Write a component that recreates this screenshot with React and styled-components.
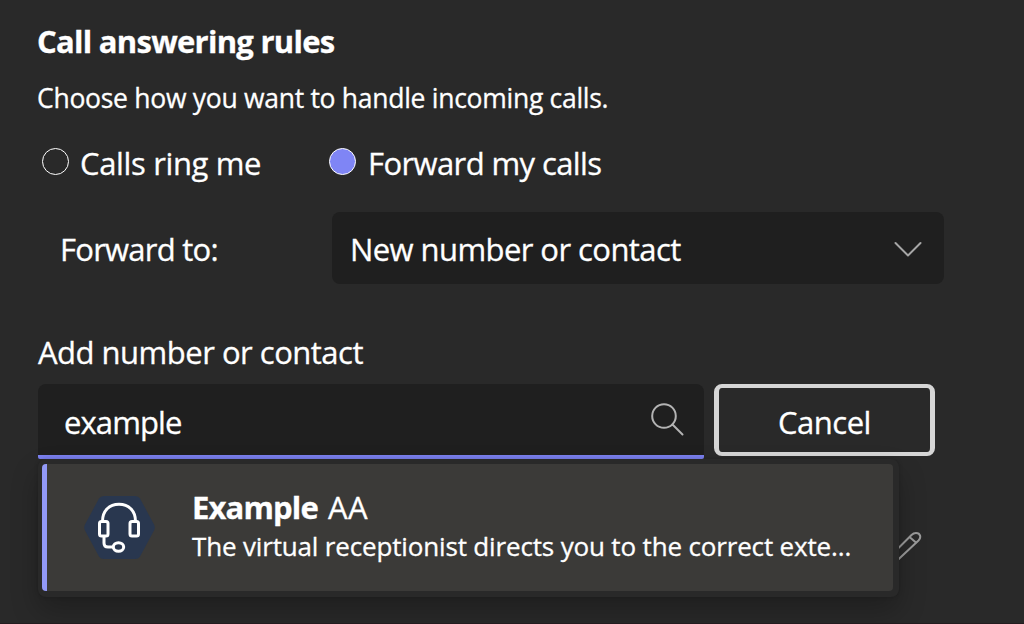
import React from "react";
import styled, { createGlobalStyle } from "styled-components";

const GlobalStyle = createGlobalStyle`
  *, *::before, *::after { box-sizing: border-box; }
  html, body { margin: 0; background: #292929; }
  body { font-family: "Open Sans", "Noto Sans", sans-serif; color: #fff; }
`;

const Panel = styled.main`
  position: relative;
  width: 1024px;
  height: 624px;
  padding: 21px 0 0 38px;
  overflow: hidden;
  background: #292929;
  border-bottom: 1px solid #231c1f;
`;

const Text = styled.span`
  display: block;
  flex: none;
  white-space: nowrap;
  font-size: ${(p) => p.$size || 31}px;
  line-height: 40px;
  font-weight: ${(p) => p.$weight || 400};
  letter-spacing: ${(p) => p.$track || 0}px;
  -webkit-text-stroke: 0.3px currentColor;
`;

const Title = styled(Text).attrs({ as: "h1" })`
  margin: 0 0 17px -1px;
`;

const Intro = styled(Text).attrs({ as: "p" })`
  margin: 0 0 0 -1px;
`;

const RadioRow = styled.div`
  display: flex;
  margin: 25px 0 29px 4px;
`;

const RadioOption = styled.label`
  display: flex;
  width: ${(p) => p.$width}px;
  gap: ${(p) => p.$gap}px;
`;

const RadioDot = styled.span`
  flex: none;
  width: 27px;
  height: 27px;
  margin-top: 5px;
  border: 1.5px solid #fff;
  border-radius: 50%;
  background: ${(p) => (p.$checked ? "#7f85f5" : "transparent")};
`;

const FieldRow = styled.div`
  display: flex;
  align-items: center;
  padding-left: 22px;
`;

const FieldLabel = styled.div`
  width: 272px;
  padding-top: 2px;
`;

const Select = styled.div`
  display: flex;
  align-items: center;
  justify-content: space-between;
  width: 612px;
  height: 72px;
  padding: 2px 22px 0 18px;
  border-radius: 8px;
  background: #1f1f1f;
`;

const AddLabel = styled.div`
  margin: 48px 0 12px;
`;

const SearchRow = styled.div`
  display: flex;
  gap: 10px;
`;

const SearchBox = styled.div`
  display: flex;
  align-items: center;
  justify-content: space-between;
  width: 666px;
  height: 75px;
  padding: 4px 19px 0 26px;
  border-bottom: 4px solid #7b80f0;
  border-radius: 8px 8px 2px 2px;
  background: #1f1f1f;
`;

const CancelButton = styled.button`
  display: flex;
  align-items: center;
  justify-content: center;
  width: 221px;
  height: 72px;
  padding: 3px 0 0;
  border: 4px solid #d6d6d6;
  border-width: 4px 5px;
  border-radius: 8px;
  background: #292929;
  color: #fff;
  font-family: inherit;
`;

const Suggestions = styled.div`
  position: absolute;
  left: 38px;
  top: 459px;
  width: 861px;
  height: 138px;
  padding: 5px 6px 6px 4px;
  border-radius: 8px;
  background: #292929;
  box-shadow: 0 14px 28px rgba(0, 0, 0, 0.24), 0 0 4px rgba(0, 0, 0, 0.16);
`;

const Suggestion = styled.div`
  display: flex;
  width: 851px;
  height: 127px;
  padding: 23px 0 0 37px;
  gap: 36px;
  border-left: 5px solid #9299f7;
  border-radius: 4px;
  background: #3b3a38;
`;

const SuggestionBody = styled.div`
  display: flex;
  flex-direction: column;
`;

const NameLine = styled.div`
  display: flex;
  gap: 10px;
  height: 39px;
`;

const SearchIcon = styled.svg`
  margin-top: -4px;
`;

const AvatarIcon = styled.svg`
  flex: none;
  margin-top: 8px;
`;

const EditIcon = styled.svg`
  position: absolute;
  left: 885px;
  top: 528px;
`;

const HeadsetAvatar = () => (
  <AvatarIcon width="72" height="65" viewBox="0 0 72 65">
    <path
      d="M20 1h31q3.500 0 5 2.500L70 29.500q1.500 3 0 6L56 61.500q-1.500 2.500-5 2.500H20q-3.500 0-5-2.500L1 35.500q-1.500-3 0-6L15 3.500Q16.500 1 20 1Z"
      fill="#29374f"
    />
    <g fill="none" stroke="#fff" strokeWidth="3">
      <path d="M18.500 26.500C18.500 15.500 25.500 9.300 35 9.300S51.500 15.500 51.500 26.500" />
      <rect x="15.500" y="26.500" width="8.500" height="14.500" rx="2" />
      <rect x="46" y="26.500" width="8.500" height="14.500" rx="2" />
      <path d="M20 41V48Q20 52 24 52H29.500" />
      <ellipse cx="34.500" cy="52" rx="5.200" ry="4.300" />
    </g>
  </AvatarIcon>
);

export default function App() {
  return (
    <>
      <GlobalStyle />
      <Panel>
        <Title $weight={700} $track={-0.72}>Call answering rules</Title>
        <Intro $size={26.5} $track={-0.28}>Choose how you want to handle incoming calls.</Intro>
        <RadioRow>
          <RadioOption $width={287} $gap={11}>
            <RadioDot />
            <Text $track={-0.35}>Calls ring me</Text>
          </RadioOption>
          <RadioOption $width={300} $gap={12}>
            <RadioDot $checked />
            <Text $track={-0.6}>Forward my calls</Text>
          </RadioOption>
        </RadioRow>
        <FieldRow>
          <FieldLabel>
            <Text $track={-0.75}>Forward to:</Text>
          </FieldLabel>
          <Select>
            <Text $track={-0.57}>New number or contact</Text>
            <svg width="28" height="17" viewBox="0 0 28 17" fill="none" stroke="#a6a6a6" strokeWidth="2" strokeLinecap="round" strokeLinejoin="round">
              <path d="M1.500 2 14 14.500 26.500 2" />
            </svg>
          </Select>
        </FieldRow>
        <AddLabel>
          <Text $track={-0.5}>Add number or contact</Text>
        </AddLabel>
        <SearchRow>
          <SearchBox>
            <Text $track={-0.9}>example</Text>
            <SearchIcon width="34" height="34" viewBox="0 0 34 34" fill="none" stroke="#b3b3b3" strokeWidth="2" strokeLinecap="round">
              <circle cx="13" cy="13" r="11.800" />
              <path d="m21.500 21.500 10 10" />
            </SearchIcon>
          </SearchBox>
          <CancelButton>
            <Text $track={-0.5}>Cancel</Text>
          </CancelButton>
        </SearchRow>
        <EditIcon width="38" height="38" viewBox="0 0 38 38" fill="none" stroke="#9b9b9b" strokeWidth="2" strokeLinejoin="round">
          <path d="M26.500 7 4 29.500 2 37l7.500-2L33.500 12.500C36.500 9.500 35.500 5 31 5Q28.500 5 26.500 7Z" />
          <path d="m24.500 9 7 6" />
        </EditIcon>
        <Suggestions>
          <Suggestion>
            <HeadsetAvatar />
            <SuggestionBody>
              <NameLine>
                <Text $weight={700} $track={-0.85}>Example</Text>
                <Text $track={0.4}>AA</Text>
              </NameLine>
              <Text $size={26} $track={-0.16}>The virtual receptionist directs you to the correct exte...</Text>
            </SuggestionBody>
          </Suggestion>
        </Suggestions>
      </Panel>
    </>
  );
}
